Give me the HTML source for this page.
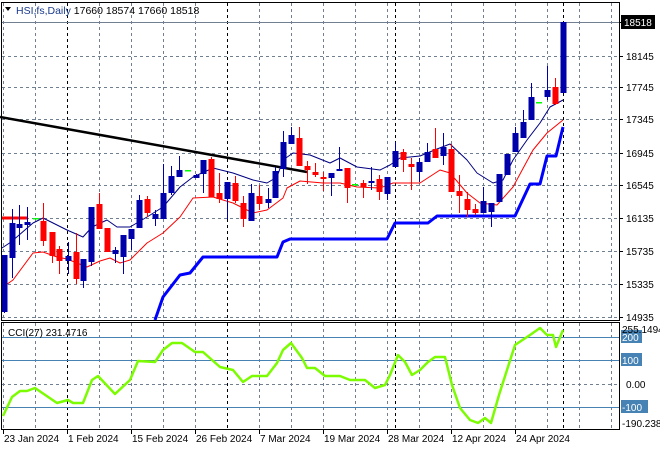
<!DOCTYPE html>
<html><head><meta charset="utf-8"><style>
html,body{margin:0;padding:0;background:#fff;width:660px;height:450px;overflow:hidden}
svg{display:block}
text{font-family:"Liberation Sans",sans-serif;font-size:10px;fill:#000}
</style></head><body>
<svg id="s" width="660" height="450" xmlns="http://www.w3.org/2000/svg">
<g id="grid"></g>
<g id="lines"></g>
<g id="candles"></g>
<rect x="1.5" y="2.5" width="618" height="318" fill="none" stroke="#000"/>
<rect x="1.5" y="322.5" width="618" height="107" fill="none" stroke="#000"/>
<polygon points="5,7 11,7 8,11" fill="#000"/>
<text x="16" y="14" style="font-size:10.5px"><tspan fill="#1a3a8a">HSI,fs,Daily</tspan>  17660 18574 17660 18518</text>
<text x="8" y="336" style="font-size:10px">CCI(27) 231.4716</text>
<g id="axis"></g>
</svg>
<script>
var NS="http://www.w3.org/2000/svg";
function el(p,t,a,txt){var e=document.createElementNS(NS,t);for(var k in a)e.setAttribute(k,a[k]);if(txt!==undefined)e.textContent=txt;document.getElementById(p).appendChild(e);return e;}
// vertical grid
var gx=[3,35,99,131,163,195,259,291,323,355,387,419,451,483,515,547,579,611];
gx.forEach(function(x){el('grid','line',{x1:x+.5,y1:3,x2:x+.5,y2:320,stroke:'#708090','stroke-dasharray':'3,3'});el('grid','line',{x1:x+.5,y1:323,x2:x+.5,y2:429,stroke:'#708090','stroke-dasharray':'3,3'});});
[67,227,395,563].forEach(function(x){el('grid','line',{x1:x+.5,y1:3,x2:x+.5,y2:320,stroke:'#000','stroke-dasharray':'3,3'});el('grid','line',{x1:x+.5,y1:323,x2:x+.5,y2:429,stroke:'#000','stroke-dasharray':'3,3'});});
var py=[[22,'18518'],[56,'18145'],[87,'17745'],[119,'17345'],[153,'16945'],[185,'16545'],[218,'16135'],[251,'15735'],[284,'15335'],[317,'14935']];
py.forEach(function(p,i){el('grid','line',{x1:2,y1:p[0]+.5,x2:619,y2:p[0]+.5,stroke:'#708090','stroke-dasharray':i==0?'':'3,3'});el('axis','line',{x1:619,y1:p[0]+.5,x2:623,y2:p[0]+.5,stroke:'#000'});
 if(i==0){el('axis','rect',{x:621,y:15,width:34,height:14,fill:'#000'});el('axis','text',{x:624,y:26,style:'fill:#fff'},p[1]);}
 else el('axis','text',{x:626,y:p[0]+4},p[1]);});
// CCI levels
[[337,'200'],[360,'100'],[407,'-100']].forEach(function(c){el('grid','line',{x1:2,y1:c[0]+.5,x2:619,y2:c[0]+.5,stroke:'#4682B4'});el('axis','rect',{x:621,y:c[0]-7,width:c[1].length*6+3,height:13,fill:'#4682B4'});el('axis','text',{x:622,y:c[0]+4,style:'fill:#fff'},c[1]);});
el('grid','line',{x1:2,y1:384.5,x2:619,y2:384.5,stroke:'#708090','stroke-dasharray':'3,3'});
el('axis','text',{x:622,y:333},'255.1494');el('axis','text',{x:626,y:388},'0.00');el('axis','text',{x:622,y:427},'-190.238');
// dates
[[3,'23 Jan 2024'],[67,'1 Feb 2024'],[131,'15 Feb 2024'],[195,'26 Feb 2024'],[259,'7 Mar 2024'],[323,'19 Mar 2024'],[387,'28 Mar 2024'],[451,'12 Apr 2024'],[515,'24 Apr 2024']].forEach(function(d){el('axis','line',{x1:d[0]+.5,y1:430,x2:d[0]+.5,y2:434,stroke:'#000'});el('axis','text',{x:d[0]+1,y:442},d[1]);});
function pl(pts,col,w){el('lines','polyline',{points:pts,fill:'none',stroke:col,'stroke-width':w,'stroke-linejoin':'round'});}
pl("0,117 307,172","#000",2.5);
pl("2,218 27,218","#f00",3);
pl("2,248 11,242 33,223 43,218 67,230 83,237 92,227 107,220 117,227 130,227 147,217 163,207 180,187 193,177 213,168 233,173 253,180 267,183 277,177 283,160 293,153 310,155 330,163 340,158 357,167 380,170 390,165 400,158 420,156 437,149 450,144 467,160 477,173 493,183 503,180 513,160 527,140 540,123 550,107 563,100","#000080",1);
pl("3,287 13,280 33,253 43,252 57,257 67,259 87,267 100,261 110,258 120,263 130,260 147,243 163,233 180,217 193,198 213,197 233,203 253,213 267,210 283,198 287,188 300,181 323,183 340,183 357,187 380,188 393,183 420,183 440,170 450,173 467,193 480,203 497,205 513,187 533,150 547,133 563,120","#f00",1);
pl("155,320 163,297 180,275 190,273 203,257 277,257 283,242 290,239 387,239 395,223 428,223 437,216 515,216 530,184 540,184 547,156 556,156 563,127","#0000ff",3);
pl("3,416 12,397 20,391 27,391 35,388 57,403 68,400 73,403 83,403 92,380 98,376 115,394 130,380 138,361 155,362 163,350 172,343 182,343 195,352 203,352 220,367 233,370 243,382 252,376 267,376 277,363 283,350 291,343 302,358 307,368 315,368 325,376 340,376 350,380 365,380 375,388 385,385 390,375 398,355 405,362 412,375 420,370 428,362 435,357 445,357 452,385 460,408 470,420 478,423 485,418 491,423 499,395 507,370 515,345 530,335 540,328 547,335 553,335 556,347 563,330","#7CFC00",2.5);
// candles: x, bodyTop, bodyBot, wickTop, wickBot, color b/r/g
var C=[[4,255,312,255,313,'b'],[12,223,258,209,278,'b'],[19,224,228,205,245,'b'],[27,222,225,207,240,'b'],[36,218,218,218,218,'g'],[43,221,241,203,246,'r'],[52,232,256,232,263,'r'],[59,249,261,246,274,'r'],[68,256,261,242,274,'b'],[76,252,279,233,284,'r'],[83,259,281,259,288,'b'],[91,207,262,207,266,'b'],[99,204,229,193,229,'r'],[107,228,252,228,252,'r'],[115,250,254,247,263,'b'],[123,235,257,235,274,'b'],[131,229,239,229,250,'b'],[139,200,228,195,228,'b'],[147,199,213,196,217,'r'],[155,214,219,210,226,'b'],[163,193,219,164,219,'b'],[171,176,193,166,195,'b'],[179,170,177,156,177,'b'],[188,170,170,170,170,'g'],[196,175,178,174,178,'b'],[203,160,174,160,193,'b'],[211,159,197,157,197,'r'],[219,193,199,173,203,'r'],[227,182,199,182,219,'b'],[235,183,201,176,203,'r'],[243,203,219,196,227,'r'],[251,193,221,184,221,'b'],[259,196,204,185,210,'r'],[268,199,203,188,208,'b'],[275,171,198,167,198,'b'],[283,142,169,131,177,'b'],[291,135,144,127,144,'b'],[299,138,166,127,166,'r'],[307,166,170,161,184,'r'],[315,172,175,163,177,'r'],[323,177,179,172,191,'r'],[331,173,178,173,196,'b'],[339,169,171,147,171,'b'],[347,168,188,168,203,'r'],[355,184,184,184,184,'g'],[363,183,187,180,198,'r'],[371,181,183,167,190,'b'],[379,179,192,175,200,'r'],[387,177,194,177,200,'b'],[395,151,167,142,167,'b'],[403,152,160,149,172,'r'],[411,164,167,158,190,'r'],[419,162,172,158,182,'b'],[427,152,162,143,162,'b'],[435,149,158,128,158,'r'],[443,147,156,133,165,'b'],[451,149,192,144,192,'r'],[459,191,196,175,213,'r'],[467,199,210,192,217,'r'],[475,209,213,204,215,'r'],[483,201,213,187,213,'b'],[491,203,212,203,227,'b'],[499,174,202,174,202,'b'],[507,154,175,154,175,'b'],[515,133,152,127,152,'b'],[523,122,138,110,138,'b'],[531,97,120,83,120,'b'],[539,102,102,102,102,'g'],[547,90,97,66,100,'b'],[555,87,104,78,105,'r'],[563,22,93,22,93,'b']];
C.forEach(function(c){var col=c[5]=='b'?'#0000AA':(c[5]=='r'?'#FF0000':'#00FF00');
 if(c[5]=='g'){el('candles','rect',{x:c[0]-3,y:c[1],width:6,height:1.5,fill:col});return;}
 el('candles','line',{x1:c[0]+.5,y1:c[3],x2:c[0]+.5,y2:c[4],stroke:col});
 el('candles','rect',{x:c[0]-2.5,y:c[1],width:6,height:Math.max(2,c[2]-c[1]),fill:col});});
</script>
</body></html>
